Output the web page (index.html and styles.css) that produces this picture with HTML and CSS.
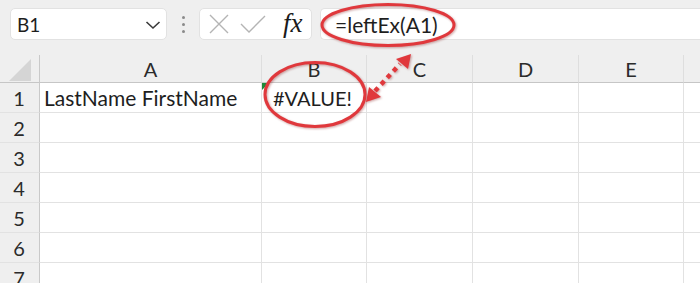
FILE: index.html
```html
<!DOCTYPE html>
<html>
<head>
<meta charset="utf-8">
<link rel="stylesheet" href="styles.css">
</head>
<body>
<div class="app">
  <div class="toolbar">
    <div class="namebox">
      <span class="ref">B1</span>
      <svg class="chev" width="16" height="10" viewBox="0 0 16 10"><polyline points="1.5,2 8,8 14.5,2" fill="none" stroke="#3a3a3a" stroke-width="1.6"/></svg>
    </div>
    <div class="grip"><i></i><i></i><i></i></div>
    <div class="btnbox">
      <svg width="24" height="22" viewBox="0 0 24 22"><path d="M3 2 L21 20 M21 2 L3 20" stroke="#b4b4b4" stroke-width="1.4" fill="none"/></svg>
      <svg width="28" height="22" viewBox="0 0 28 22"><path d="M2 11 L10 19 L26 3" stroke="#b4b4b4" stroke-width="1.4" fill="none"/></svg>
      <span class="fx">fx</span>
    </div>
    <div class="formula">=leftEx(A1)</div>
  </div>
  <div class="sheet">
    <div class="corner"><svg width="24" height="24" viewBox="0 0 24 24"><polygon points="23,1 23,23 1,23" fill="#d5d5d5"/></svg></div>
    <div class="ch">A</div>
    <div class="ch">B</div>
    <div class="ch">C</div>
    <div class="ch">D</div>
    <div class="ch">E</div>
    <div class="ch last"></div>

    <div class="rh">1</div>
    <div class="cell">LastName FirstName</div>
    <div class="cell err">#VALUE!</div>
    <div class="cell"></div><div class="cell"></div><div class="cell"></div><div class="cell last"></div>

    <div class="rh">2</div>
    <div class="cell"></div><div class="cell"></div><div class="cell"></div><div class="cell"></div><div class="cell"></div><div class="cell last"></div>
    <div class="rh">3</div>
    <div class="cell"></div><div class="cell"></div><div class="cell"></div><div class="cell"></div><div class="cell"></div><div class="cell last"></div>
    <div class="rh">4</div>
    <div class="cell"></div><div class="cell"></div><div class="cell"></div><div class="cell"></div><div class="cell"></div><div class="cell last"></div>
    <div class="rh">5</div>
    <div class="cell"></div><div class="cell"></div><div class="cell"></div><div class="cell"></div><div class="cell"></div><div class="cell last"></div>
    <div class="rh">6</div>
    <div class="cell"></div><div class="cell"></div><div class="cell"></div><div class="cell"></div><div class="cell"></div><div class="cell last"></div>
    <div class="rh">7</div>
    <div class="cell"></div><div class="cell"></div><div class="cell"></div><div class="cell"></div><div class="cell"></div><div class="cell last"></div>
  </div>
  <svg class="annot" width="700" height="283" viewBox="0 0 700 283">
    <g fill="none" stroke="#e0383c" stroke-width="3" class="shadow">
      <ellipse cx="388" cy="25" rx="66" ry="20.5"/>
      <ellipse cx="315" cy="94.5" rx="50" ry="32"/>
      <line x1="375" y1="91" x2="400" y2="64" stroke-width="4.5" stroke-dasharray="4.5 4.5"/>
    </g>
    <g fill="#e0383c" class="shadow">
      <polygon points="411,54 408,69 396,59"/>
      <polygon points="366,102 369,87 381,97"/>
    </g>
  </svg>
</div>
</body>
</html>
```
FILE: styles.css
```css
html, body {
  margin: 0;
  padding: 0;
  background: #ffffff;
}
.app {
  position: relative;
  width: 700px;
  height: 283px;
  overflow: hidden;
  font-family: Lato, "Open Sans", sans-serif;
  color: #1e1e1e;
}
.toolbar {
  height: 55px;
  box-sizing: border-box;
  background: #efefef;
  padding: 8px 0 0 10px;
  display: flex;
  align-items: flex-start;
}
.namebox {
  flex: none;
  width: 157px;
  height: 32px;
  box-sizing: border-box;
  background: #fff;
  border: 1px solid #e2e2e2;
  border-radius: 5px;
  display: flex;
  align-items: center;
  justify-content: space-between;
  padding: 0 5px 0 6px;
  font-size: 19px;
}
.chev { margin-top: 1px; }
.grip {
  flex: none;
  width: 32px;
  height: 32px;
  display: flex;
  flex-direction: column;
  align-items: center;
  justify-content: center;
  gap: 4px;
}
.grip i {
  display: block;
  width: 3px;
  height: 3px;
  border-radius: 50%;
  background: #8a8a8a;
}
.btnbox {
  flex: none;
  width: 113px;
  height: 32px;
  box-sizing: border-box;
  background: #fff;
  border: 1px solid #e2e2e2;
  border-radius: 5px;
  display: flex;
  align-items: center;
  padding-left: 7px;
  gap: 8px;
}
.fx {
  font-family: "Liberation Serif", "DejaVu Serif", serif;
  font-style: italic;
  font-size: 27px;
  color: #1a1a1a;
  margin-left: 8px;
  line-height: 1;
  margin-top: -2px;
}
.formula {
  flex: 1;
  margin-left: 8px;
  height: 32px;
  box-sizing: border-box;
  background: #fff;
  border: 1px solid #e2e2e2;
  border-right: none;
  border-radius: 5px 0 0 5px;
  padding-left: 14px;
  display: flex;
  align-items: center;
  font-size: 21px;
}
.sheet {
  display: grid;
  grid-template-columns: 40px 222px 105px 106px 106px 105px 1fr;
  grid-template-rows: 28px repeat(7, 30px);
}
.corner {
  background: #efefef;
  border-right: 1px solid #c9c9c9;
  border-bottom: 1px solid #c6c6c6;
  display: flex;
  align-items: center;
  justify-content: center;
  padding-top: 2px;
  box-sizing: border-box;
}
.ch {
  background: #efefef;
  border-right: 1px solid #dedede;
  border-bottom: 1px solid #c6c6c6;
  display: flex;
  align-items: center;
  justify-content: center;
  font-size: 20px;
  color: #2b2b2b;
  padding-top: 1px;
  box-sizing: border-box;
}
.rh {
  background: #efefef;
  border-right: 1px solid #c9c9c9;
  border-bottom: 1px solid #e2e2e2;
  display: flex;
  align-items: center;
  justify-content: center;
  font-size: 20px;
  color: #2b2b2b;
  box-sizing: border-box;
  padding-right: 1px;
}
.cell {
  position: relative;
  background: #fff;
  border-right: 1px solid #e2e2e2;
  border-bottom: 1px solid #e2e2e2;
  display: flex;
  align-items: center;
  padding-left: 4px;
  font-size: 21px;
  white-space: nowrap;
  box-sizing: border-box;
}
.last { border-right: none; }
.err { padding-left: 11px; font-size: 20px; }
.err::before {
  content: "";
  position: absolute;
  left: 0;
  top: 0;
  width: 0;
  height: 0;
  border-top: 7px solid #1e8a3a;
  border-right: 7px solid transparent;
}
.annot {
  position: absolute;
  left: 0;
  top: 0;
  pointer-events: none;
}
.shadow {
  filter: drop-shadow(1px 1px 1px rgba(120, 0, 0, 0.35));
}
```
